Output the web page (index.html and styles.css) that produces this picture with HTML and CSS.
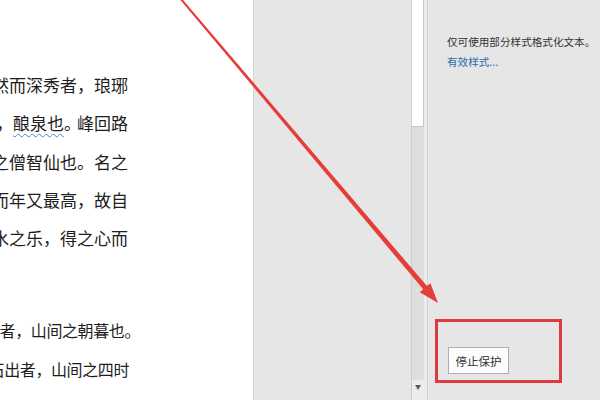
FILE: index.html
```html
<!DOCTYPE html>
<html lang="zh-CN">
<head>
  <meta charset="utf-8">
  <title>限制编辑</title>
  <link rel="stylesheet" href="styles.css">
</head>
<body>
  <div class="window">
    <section class="doc">
      <div class="para upper">
        <div class="line"><span>望之蔚然而深秀者，琅琊</span></div>
        <div class="line"><span>间者，<u class="spell">酿泉也</u><span class="narrow">。</span>峰回路</span></div>
        <div class="line"><span>山之僧智仙也。名之</span></div>
        <div class="line"><span>少辄醉，而年又最高，故自</span></div>
        <div class="line"><span>间也。山水之乐，得之心而</span></div>
      </div>
      <div class="para lower">
        <div class="line wide"><span>晦明变化者，山间之朝暮也。</span></div>
        <div class="line"><span>水落而石出者，山间之四时</span></div>
      </div>
    </section>

    <div class="gutter"></div>

    <div class="scrollbar">
      <div class="thumb"></div>
      <div class="track"></div>
      <div class="arrow-down">&#9660;</div>
    </div>

    <aside class="pane">
      <p class="note">仅可使用部分样式格式化文本。</p>
      <a class="link" href="#">有效样式...</a>

      <div class="highlight">
        <button class="stop-button" type="button">停止保护</button>
      </div>
    </aside>

    <!-- annotation arrow -->
    <svg class="annotation" width="600" height="400" viewBox="0 0 600 400" aria-hidden="true">
      <polygon points="179.2,-1.4 423.2,289.3 419.8,292.2 438,303 430.4,283.2 427,286.1 180.8,-2.6" fill="#e53e3a" />
    </svg>
  </div>
</body>
</html>
```

FILE: styles.css
```css
html,
body {
  margin: 0;
  padding: 0;
}

body {
  width: 600px;
  height: 400px;
  overflow: hidden;
  font-family: "Noto Sans CJK SC", "Noto Sans", sans-serif;
}

.window {
  position: relative;
  display: flex;
  width: 600px;
  height: 400px;
  background-color: #e6e6e6;
}

/* Document page */
.doc {
  width: 253px;
  flex-shrink: 0;
  background-color: #ffffff;
  border-right: 1px solid #d6d6d6;
  padding-top: 66px;
}

.para {
  display: flex;
  flex-direction: column;
}

.lower {
  margin-top: 54px;
}

.line {
  display: flex;
  justify-content: flex-end;
  width: 128px;
  height: 38.3px;
  line-height: 38.3px;
  overflow: hidden;
  white-space: nowrap;
  color: #1e1e1e;
}

.upper .line {
  font-size: 17px;
}

.lower .line {
  width: 129px;
  font-size: 16px;
  letter-spacing: -0.4px;
}

.lower .line.wide {
  width: 140px;
}

.line > span {
  flex-shrink: 0;
}

.narrow {
  margin-right: -4px;
}

.spell {
  text-decoration: underline wavy #5b7fd1;
  text-decoration-thickness: 1px;
  text-underline-offset: 3px;
}

/* Gap between page and pane */
.gutter {
  width: 157px;
  flex-shrink: 0;
}

.scrollbar {
  width: 15px;
  flex-shrink: 0;
  display: flex;
  flex-direction: column;
  background-color: #ececec;
  border-left: 1px solid #cdcdcd;
  border-right: 1px solid #d2d2d2;
}

.thumb {
  width: 12px;
  height: 127px;
  background-color: #ffffff;
  border-right: 1px solid #c6c6c6;
  border-bottom: 1px solid #c6c6c6;
  box-sizing: border-box;
}

.track {
  flex: 1;
  width: 12px;
  background-color: #dedede;
}

.arrow-down {
  height: 20px;
  font-size: 6px;
  line-height: 14px;
  text-align: center;
  color: #555;
  background-color: #ececec;
  padding-right: 3px;
}

/* Restrict editing pane */
.pane {
  flex: 1;
  display: flex;
  flex-direction: column;
  align-items: flex-start;
  padding-top: 32px;
  padding-left: 19px;
  font-size: 10.6px;
  color: #333;
}

.note {
  margin: 0;
  line-height: 20px;
  white-space: nowrap;
}

.link {
  line-height: 20px;
  color: #2a6ab0;
  text-decoration: none;
}

.highlight {
  margin-top: auto;
  margin-bottom: 17px;
  margin-left: -12px;
  width: 127px;
  height: 64px;
  box-sizing: border-box;
  border: 3px solid #dc3b3f;
  padding: 25px 0 0 10px;
}

.stop-button {
  display: block;
  width: 61px;
  height: 27px;
  padding: 0;
  background-color: #fdfdfd;
  border: 1px solid #adadad;
  font-family: "Noto Sans CJK SC", sans-serif;
  font-size: 11.5px;
  color: #333;
}

.annotation {
  position: absolute;
  left: 0;
  top: 0;
  pointer-events: none;
}
```
